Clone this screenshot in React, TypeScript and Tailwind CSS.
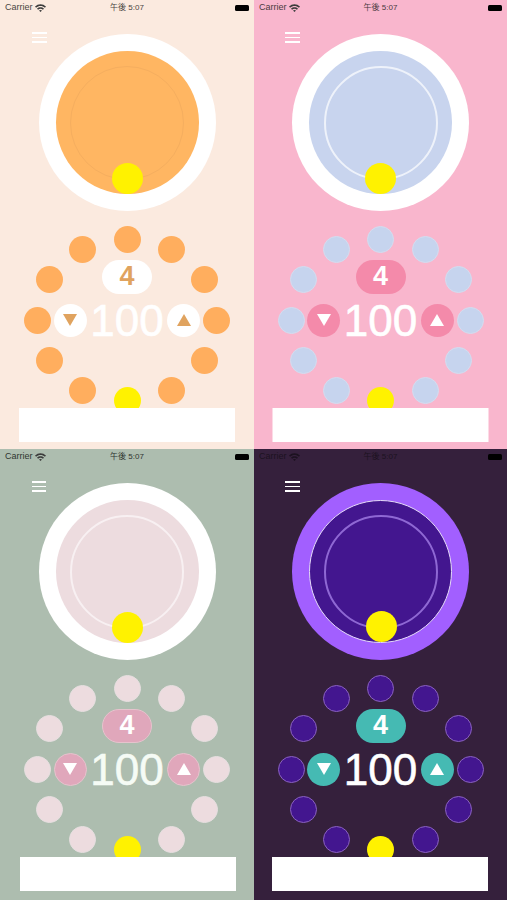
const font = { fontFamily: '"Liberation Sans", "Noto Sans CJK JP", sans-serif' };

type Theme = {
  bg: string;
  status: string;
  outer: string;
  inner: string;
  line: string;
  dot: string;
  accent: string;
  accentText: string;
  tri: string;
  big: string;
  menu: string;
  banner: string;
};

const themes: Theme[] = [
  {
    bg: 'bg-[#fbeadf]',
    status: 'text-[#4a4542]',
    outer: 'bg-white',
    inner: 'bg-[#ffb662]',
    line: 'border border-[#f5ae5f]',
    dot: 'bg-[#ffae5e]',
    accent: 'bg-white',
    accentText: 'text-[#e0a35f]',
    tri: '#e0a35f',
    big: 'text-white',
    menu: 'left-[32px]',
    banner: '',
  },
  {
    bg: 'bg-[#f9b6cd]',
    status: 'text-[#4a3a40]',
    outer: 'bg-white',
    inner: 'bg-[#c8d4ee]',
    line: 'border-2 border-[#eef2fa]',
    dot: 'bg-[#c6d4ee] border border-[#d5dcef]',
    accent: 'bg-[#f48aaa]',
    accentText: 'text-white',
    tri: '#ffffff',
    big: 'text-white',
    menu: 'left-[31px]',
    banner: '-translate-x-[0.5px]',
  },
  {
    bg: 'bg-[#adbdaf]',
    status: 'text-[#2f3530]',
    outer: 'bg-white',
    inner: 'bg-[#eddcdf]',
    line: 'border-2 border-[#f8f0f2]',
    dot: 'bg-[#eddcdf] border border-[#e6dfe0]',
    accent: 'bg-[#e0a7bb] border border-[#e6c3cd]',
    accentText: 'text-white',
    tri: '#ffffff',
    big: 'text-[#f5fbf5]',
    menu: 'left-[31.5px]',
    banner: 'translate-x-[1px]',
  },
  {
    bg: 'bg-[#35203c]',
    status: 'text-[#1c1220]',
    outer: 'bg-[#a25fff]',
    inner: 'bg-[#43168f] border border-[#e6dcf8]',
    line: 'border-2 border-[#8f68d4]',
    dot: 'bg-[#43168f] border border-[#8b62c0]',
    accent: 'bg-[#45bab3]',
    accentText: 'text-white',
    tri: '#ffffff',
    big: 'text-white',
    menu: 'left-[31px]',
    banner: '-translate-x-[1px]',
  },
];

// dot centres, measured from the middle of the ring
const dots = [
  [0, -81],
  [44.5, -70.5],
  [77.5, -40.5],
  [89.5, 0],
  [77.5, 40.5],
  [44.5, 70.5],
  [-44.5, 70.5],
  [-77.5, 40.5],
  [-89.5, 0],
  [-77.5, -40.5],
  [-44.5, -70.5],
];

function Wifi({ color }: { color: string }) {
  return (
    <svg width="11" height="8" viewBox="0 0 11 8" fill={color}>
      <path d="M0 2.6C3-.7 8-.7 11 2.6L9.9 3.8C7.4 1.3 3.6 1.3 1.1 3.8Z" />
      <path d="M2 4.7C3.9 2.8 7.1 2.8 9 4.7L7.9 5.8C6.5 4.5 4.5 4.5 3.1 5.8Z" />
      <path d="M4 6.6C4.8 5.9 6.2 5.9 7 6.6L5.5 8Z" />
    </svg>
  );
}

function Triangle({ up, color }: { up?: boolean; color: string }) {
  return (
    <svg width="14" height="12" viewBox="0 0 14 12">
      <path d={up ? 'M7 0L14 12H0Z' : 'M0 0H14L7 12Z'} fill={color} />
    </svg>
  );
}

function Panel({ theme, dark }: { theme: Theme; dark?: boolean }) {
  const statusColor = dark ? '#1c1220' : '#3c3c3c';
  return (
    <div className={`relative flex flex-col items-center overflow-hidden ${theme.bg}`}>
      {/* status bar */}
      <div className={`relative flex h-[15px] w-full items-center px-[5px] pt-[1px] text-[9px] ${theme.status}`}>
        <span className="mr-[2px]">Carrier</span>
        <Wifi color={statusColor} />
        <span className="absolute left-0 right-0 text-center text-[8px]">午後 5:07</span>
        <div className="ml-auto h-[6px] w-[14px] rounded-[1.5px] bg-black" />
      </div>

      {/* menu */}
      <div className={`absolute top-[32px] flex w-[14.5px] flex-col gap-[3px] ${theme.menu}`}>
        <div className="h-[1.5px] bg-white" />
        <div className="h-[1.5px] bg-white" />
        <div className="h-[1.5px] bg-white" />
      </div>

      {/* dial */}
      <div className={`mt-[19px] flex h-[177px] w-[177px] items-center justify-center rounded-full ${theme.outer}`}>
        <div className={`relative flex h-[143px] w-[143px] items-center justify-center rounded-full ${theme.inner}`}>
          <div className={`h-[114px] w-[114px] rounded-full ${theme.line}`} />
          <div className="absolute bottom-0 left-[56px] h-[31px] w-[31px] rounded-full bg-[#fff200]" />
        </div>
      </div>

      {/* ring of dots */}
      <div className="relative mt-[14px] flex h-[190px] w-[206px] flex-col items-center">
        {dots.map(([x, y], i) => (
          <div
            key={i}
            className={`absolute h-[27px] w-[27px] rounded-full ${theme.dot}`}
            style={{ left: 103 + x - 13.5, top: 95 + y - 13.5 }}
          />
        ))}
        <div className="absolute left-[89.5px] top-[162px] h-[27px] w-[27px] rounded-full bg-[#fff200]" />

        <div className={`mt-[34.5px] flex h-[34px] w-[50px] items-center justify-center rounded-[17px] text-[27px] font-bold ${theme.accent} ${theme.accentText}`}>
          4
        </div>
        <div className="mt-[10px] flex w-[147px] items-center justify-between">
          <div className={`flex h-[33px] w-[33px] items-center justify-center rounded-full ${theme.accent}`}>
            <Triangle color={theme.tri} />
          </div>
          <span className={`text-[44px] leading-[33px] [-webkit-text-stroke:0.6px_currentColor] ${theme.big}`}>100</span>
          <div className={`flex h-[33px] w-[33px] items-center justify-center rounded-full ${theme.accent}`}>
            <Triangle up color={theme.tri} />
          </div>
        </div>
      </div>

      {/* ad banner */}
      <div className={`relative mt-[-7px] h-[34px] w-[216px] bg-white ${theme.banner}`} />
    </div>
  );
}

export default function App() {
  return (
    <div className="grid h-[900px] w-[507px] grid-cols-[254px_253px] grid-rows-[449px_451px] overflow-hidden" style={font}>
      <Panel theme={themes[0]} />
      <Panel theme={themes[1]} />
      <Panel theme={themes[2]} />
      <Panel theme={themes[3]} dark />
    </div>
  );
}
